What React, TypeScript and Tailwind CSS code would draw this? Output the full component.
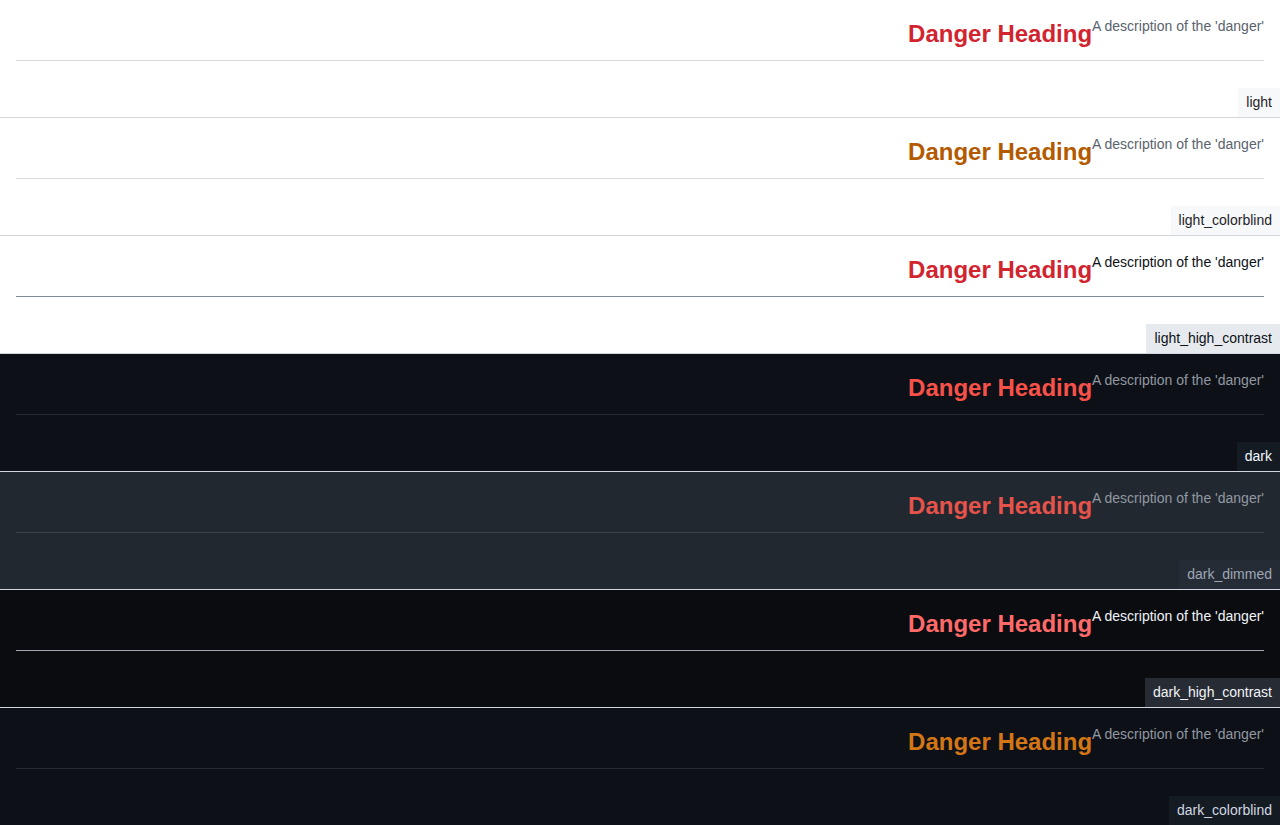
const themes = [
  {
    name: "light",
    bg: "bg-[#ffffff]",
    danger: "text-[#d1242f]",
    desc: "text-[#59636e]",
    line: "border-[#d8dce1]",
    tagBg: "bg-[#f6f8fa]",
    tagText: "text-[#1f2328]",
  },
  {
    name: "light_colorblind",
    bg: "bg-[#ffffff]",
    danger: "text-[#b35900]",
    desc: "text-[#59636e]",
    line: "border-[#d8dce1]",
    tagBg: "bg-[#f6f8fa]",
    tagText: "text-[#1f2328]",
  },
  {
    name: "light_high_contrast",
    bg: "bg-[#ffffff]",
    danger: "text-[#d1242f]",
    desc: "text-[#0e1116]",
    line: "border-[#818b98]",
    tagBg: "bg-[#e6eaef]",
    tagText: "text-[#0e1116]",
  },
  {
    name: "dark",
    bg: "bg-[#0d1117]",
    danger: "text-[#f85149]",
    desc: "text-[#9198a1]",
    line: "border-[#262b32]",
    tagBg: "bg-[#151b23]",
    tagText: "text-[#f0f6fc]",
  },
  {
    name: "dark_dimmed",
    bg: "bg-[#212830]",
    danger: "text-[#e5534b]",
    desc: "text-[#9198a1]",
    line: "border-[#3a4049]",
    tagBg: "bg-[#262c36]",
    tagText: "text-[#9ea7b3]",
  },
  {
    name: "dark_high_contrast",
    bg: "bg-[#0a0c10]",
    danger: "text-[#ff6a69]",
    desc: "text-[#f0f3f6]",
    line: "border-[#9ea7b3]",
    tagBg: "bg-[#272b33]",
    tagText: "text-[#f0f3f6]",
  },
  {
    name: "dark_colorblind",
    bg: "bg-[#0d1117]",
    danger: "text-[#d47616]",
    desc: "text-[#9198a1]",
    line: "border-[#262b32]",
    tagBg: "bg-[#151b23]",
    tagText: "text-[#d1d7e0]",
  },
];

function Panel({ t }: { t: (typeof themes)[number] }) {
  return (
    <div className={`flex h-[118px] flex-col border-b border-[#d0d7de] ${t.bg}`}>
      <div className="px-4 pt-4">
        <div className="flex items-start justify-end">
          <h2 className={`text-2xl leading-9 font-bold ${t.danger}`}>Danger Heading</h2>
          <p className={`text-sm leading-5 ${t.desc}`}>A description of the 'danger'</p>
        </div>
        <div className={`mt-2 border-b ${t.line}`} />
      </div>
      <div className="mt-auto flex justify-end">
        <span className={`px-2 py-1 text-sm leading-[21px] ${t.tagBg} ${t.tagText}`}>{t.name}</span>
      </div>
    </div>
  );
}

export default function App() {
  return (
    <div className="min-h-screen font-['Liberation_Sans',Arial,sans-serif]">
      {themes.map((t) => (
        <Panel key={t.name} t={t} />
      ))}
    </div>
  );
}
